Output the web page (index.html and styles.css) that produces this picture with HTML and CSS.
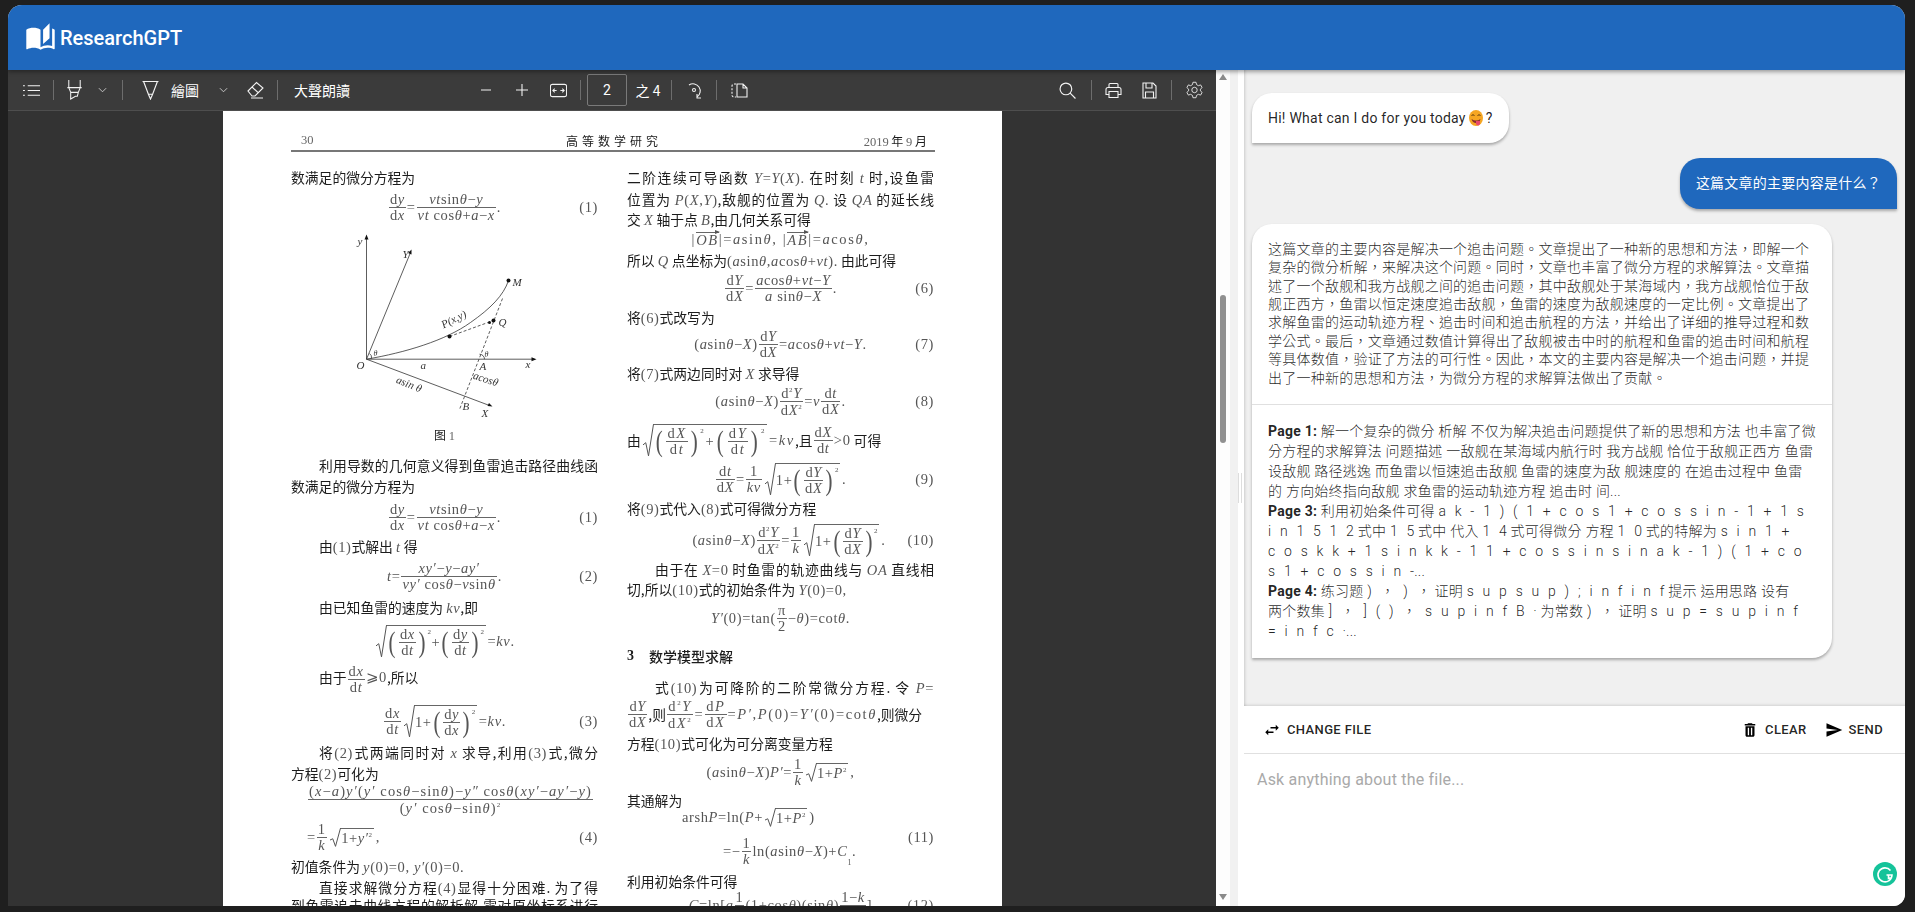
FILE: index.html
```html
<!DOCTYPE html>
<html lang="zh">
<head>
  <meta charset="UTF-8">
  <meta name="viewport" content="width=device-width, initial-scale=1.0">
  <title>ResearchGPT</title>
  <link rel="stylesheet" href="styles.css">
</head>
<body>
  <svg class="defs" width="0" height="0">
    <symbol id="rad" viewBox="0 0 10 30" preserveAspectRatio="none"><path d="M0 19 L2.5 17 L5 29 L9.5 .5" fill="none" stroke="#555" stroke-width="1" vector-effect="non-scaling-stroke"/></symbol>
  </svg>

  <div class="window">
    <header class="appbar">
      <svg class="logo" viewBox="0 0 24 24"><path d="M19 1l-5 5v11l5-4.5V1zM1 6v14.65c0 .25.25.5.5.5.1 0 .15-.05.25-.05C3.1 20.45 5.05 20 6.5 20c1.95 0 4.05.4 5.5 1.5V6c-1.45-1.1-3.55-1.5-5.5-1.5S2.45 4.9 1 6zm22 13.5V6c-.6-.45-1.25-.75-2-1v13.5c-1.1-.35-2.3-.5-3.5-.5-1.7 0-4.15.65-5.5 1.5v2c1.35-.85 3.8-1.5 5.5-1.5 1.65 0 3.35.3 4.75 1.05.1.05.15.05.25.05.25 0 .5-.25.5-.5v-1.1z"/></svg>
      <span class="brand">ResearchGPT</span>
    </header>

    <div class="content">
      <section class="pdf-pane">
        <div class="toolbar">
          <svg class="ti" viewBox="0 0 18 14"><path d="M5 2h13M5 7h13M5 12h13M0 2h2M0 7h2M0 12h2"/></svg>
          <i class="sep"></i>
          <svg class="ti tall" viewBox="0 0 16 21"><path d="M2 0v8M14 0v8M.5 8h15M2 8l2 5v7l5-3h2l1-4 2-5M4 13h8"/></svg>
          <svg class="chev" viewBox="0 0 10 6"><path d="M1 1l4 4 4-4"/></svg>
          <i class="sep"></i>
          <svg class="ti tall" viewBox="0 0 16 18"><path d="M.5 1h15M1.500 1L6 13h4l4.500-12M6 13l2 4.500 2-4.500"/></svg>
          <span class="tb-text">繪圖</span>
          <svg class="chev" viewBox="0 0 10 6"><path d="M1 1l4 4 4-4"/></svg>
          <svg class="ti tall" viewBox="0 0 17 18"><path d="M1 10l8.500-8.500 6.500 5.500-8 8H5zM5 6l6.500 6M4 17h12"/></svg>
          <i class="sep"></i>
          <span class="tb-text">大聲朗讀</span>
          <span></span>
          <svg class="ti small" viewBox="0 0 12 12"><path d="M1 6h10"/></svg>
          <svg class="ti small" viewBox="0 0 12 12"><path d="M0 6h12M6 0v12"/></svg>
          <svg class="ti" viewBox="0 0 18 14"><rect x=".5" y=".5" width="17" height="13" rx="2"/><path d="M3 7h4M11 7h4M5 5L3 7l2 2M13 5l2 2-2 2"/></svg>
          <i class="sep"></i>
          <span class="page-input">2</span>
          <span class="tb-text">之 4</span>
          <i class="sep"></i>
          <svg class="ti tall" viewBox="0 0 17 18"><path d="M3 4a7 7 0 1 1 8 12M11 13v4h4"/><circle cx="8" cy="9" r="1.500"/></svg>
          <i class="sep"></i>
          <svg class="ti" viewBox="0 0 17 15"><path d="M5 1H3a2 2 0 0 0-2 2v9a2 2 0 0 0 2 2h2" stroke-dasharray="2 1.500"/><path d="M6 1h6l4 4v9H6zM12 1v4h4"/></svg>
          <span></span>
          <svg class="ti" viewBox="0 0 16 16"><circle cx="6.500" cy="6.500" r="5.500"/><path d="M10.500 10.500L15.500 15.500"/></svg>
          <i class="sep"></i>
          <svg class="ti" viewBox="0 0 17 16"><path d="M4 5V2a1 1 0 0 1 1-1h7a1 1 0 0 1 1 1v3M4 12H1V7a2 2 0 0 1 2-2h11a2 2 0 0 1 2 2v5h-3M4 9h9v6H4z"/></svg>
          <svg class="ti" viewBox="0 0 15 17"><path d="M1 1h10l3 3v12H1zM4 1v5h6V1M3.500 16v-6h8v6"/></svg>
          <i class="sep"></i>
          <svg class="ti gear" viewBox="1 1 22 22"><path d="M10 2h4l.6 3 2.400 1.400 2.900-1 2 3.500-2.300 2a6 6 0 0 1 0 2.200l2.300 2-2 3.500-2.900-1L14.600 19 14 22h-4l-.6-3L7 17.600l-2.900 1-2-3.500 2.300-2a6 6 0 0 1 0-2.200l-2.300-2 2-3.500 2.900 1L9.400 5z"/><circle cx="12" cy="12" r="3.500"/></svg>
        </div>

        <div class="viewer">
          <article class="page">
            <div class="page-head">
              <span class="num">30</span>
              <span class="journal">高等数学研究</span>
              <span class="date"><span class="g">2019</span> 年 <span class="g">9</span> 月</span>
            </div>

            <div class="columns">
              <div class="col col-left">
                <div class="line"><span class="txt">数满足的微分方程为</span></div>
                <div class="line eq"><span class="sp"></span><span class="math"><span class="frac"><span>d<i>y</i></span><span>d<i>x</i></span></span>=<span class="frac"><span><i>vt</i>sin<i>θ</i>−<i>y</i></span><span><i>vt</i> cos<i>θ</i>+<i>a</i>−<i>x</i></span></span>.</span><span class="tag">(1)</span></div>
                <div class="line center">
                  <svg class="figure" viewBox="74.5 108.500 200 195" width="200" height="195">
                    <g class="fig-lines">
                      <path d="M96 238.700V118M96 238.700H262M96 238.700L140 132M96 238.700L219 285"/>
                      <path d="M96 238.700C135 232 175 220 200 202C220 188 233 175 238 160"/>
                      <path class="dash" d="M179 216L223 200M232 178L189 289"/>
                      <path d="M214 238.700a5 5 0 0 0-5-5M101 238a5 5 0 0 0-2-5"/>
                    </g>
                    <g class="fig-dots">
                      <circle cx="179" cy="216" r="2"/><circle cx="223" cy="200" r="2"/><circle cx="238" cy="160" r="2"/><circle cx="219" cy="202" r="1.500"/>
                      <path d="M96 114l-2 5h4zM266 238.700l-5-2v4zM141 129l-3.500 3.500 3.500 1.500zM222 286l-5-.5 1.500-3z"/>
                    </g>
                    <g class="fig-text">
                      <text x="87" y="124">y</text><text x="132" y="137">Y</text><text x="242" y="165">M</text>
                      <text x="228" y="205">Q</text><text x="86" y="248">O</text><text x="150" y="248">a</text>
                      <text x="209" y="249">A</text><text x="255" y="247">x</text><text x="192" y="289">B</text>
                      <text x="211" y="296">X</text><text class="sm" x="103" y="235">θ</text><text class="sm" x="214" y="236">θ</text>
                      <text x="173" y="208" transform="rotate(-27 173 208)">P(x,y)</text>
                      <text x="125" y="262" transform="rotate(22 125 262)">asin θ</text>
                      <text x="202" y="258" transform="rotate(18 202 258)">acosθ</text>
                    </g>
                  </svg>
                </div>
                <div class="line center"><span class="caption">图 <span class="g">1</span></span></div>
                <div class="line"><span class="txt just ind">利用导数的几何意义得到鱼雷追击路径曲线函</span></div>
                <div class="line"><span class="txt">数满足的微分方程为</span></div>
                <div class="line eq"><span class="sp"></span><span class="math"><span class="frac"><span>d<i>y</i></span><span>d<i>x</i></span></span>=<span class="frac"><span><i>vt</i>sin<i>θ</i>−<i>y</i></span><span><i>vt</i> cos<i>θ</i>+<i>a</i>−<i>x</i></span></span>.</span><span class="tag">(1)</span></div>
                <div class="line"><span class="txt ind">由<span class="m">(1)</span>式解出 <span class="m"><i>t</i></span> 得</span></div>
                <div class="line eq"><span class="sp"></span><span class="math"><i>t</i>=<span class="frac"><span><i>xy′</i>−<i>y</i>−<i>ay′</i></span><span><i>vy′</i> cos<i>θ</i>−<i>v</i>sin<i>θ</i></span></span>.</span><span class="tag">(2)</span></div>
                <div class="line"><span class="txt ind">由已知鱼雷的速度为 <span class="m"><i>kv</i></span>,即</span></div>
                <div class="line eq"><span class="sp"></span><span class="math"><span class="sqrt"><svg class="rad"><use href="#rad"/></svg><span class="rc"><span class="bp">(</span><span class="frac"><span>d<i>x</i></span><span>d<i>t</i></span></span><span class="bp">)</span><sup>2</sup>+<span class="bp">(</span><span class="frac"><span>d<i>y</i></span><span>d<i>t</i></span></span><span class="bp">)</span><sup>2</sup></span></span>=<i>kv</i>.</span><span class="sp"></span></div>
                <div class="line"><span class="txt ind">由于<span class="m"><span class="frac"><span>d<i>x</i></span><span>d<i>t</i></span></span>⩾0</span>,所以</span></div>
                <div class="line eq"><span class="sp"></span><span class="math"><span class="frac"><span>d<i>x</i></span><span>d<i>t</i></span></span><span class="sqrt"><svg class="rad"><use href="#rad"/></svg><span class="rc">1+<span class="bp">(</span><span class="frac"><span>d<i>y</i></span><span>d<i>x</i></span></span><span class="bp">)</span><sup>2</sup></span></span>=<i>kv</i>.</span><span class="tag">(3)</span></div>
                <div class="line"><span class="txt just ind">将<span class="m">(2)</span>式两端同时对 <span class="m"><i>x</i></span> 求导,利用<span class="m">(3)</span>式,微分</span></div>
                <div class="line"><span class="txt">方程<span class="m">(2)</span>可化为</span></div>
                <div class="line eq wide"><span class="math"><span class="frac"><span>(<i>x</i>−<i>a</i>)<i>y′</i>(<i>y′</i> cos<i>θ</i>−sin<i>θ</i>)−<i>y″</i> cos<i>θ</i>(<i>xy′</i>−<i>ay′</i>−<i>y</i>)</span><span>(<i>y′</i> cos<i>θ</i>−sin<i>θ</i>)<sup>2</sup></span></span></span></div>
                <div class="line eq wide"><span class="math">=<span class="frac"><span>1</span><span><i>k</i></span></span> <span class="sqrt"><svg class="rad"><use href="#rad"/></svg><span class="rc">1+<i>y′</i><sup>2</sup></span></span> ,</span><span class="tag">(4)</span></div>
                <div class="line"><span class="txt">初值条件为 <span class="m"><i>y</i>(0)=0, <i>y′</i>(0)=0.</span></span></div>
                <div class="line"><span class="txt just ind">直接求解微分方程<span class="m">(4)</span>显得十分困难. 为了得</span></div>
                <div class="line"><span class="txt just">到鱼雷追击曲线方程的解析解,需对原坐标系进行</span></div>
              </div>

              <div class="col col-right">
                <div class="line"><span class="txt just">二阶连续可导函数 <span class="m"><i>Y</i>=<i>Y</i>(<i>X</i>).</span> 在时刻 <span class="m"><i>t</i></span> 时,设鱼雷</span></div>
                <div class="line"><span class="txt just">位置为 <span class="m"><i>P</i>(<i>X</i>,<i>Y</i>)</span>,敌舰的位置为 <span class="m"><i>Q</i>.</span> 设 <span class="m"><i>QA</i></span> 的延长线</span></div>
                <div class="line"><span class="txt">交 <span class="m"><i>X</i></span> 轴于点 <span class="m"><i>B</i></span>,由几何关系可得</span></div>
                <div class="line eq"><span class="sp"></span><span class="math loose">|<span class="vec"><i>OB</i></span>|=<i>a</i>sin<i>θ</i>, |<span class="vec"><i>AB</i></span>|=<i>a</i>cos<i>θ</i>,</span><span class="sp"></span></div>
                <div class="line"><span class="txt">所以 <span class="m"><i>Q</i></span> 点坐标为<span class="m">(<i>a</i>sin<i>θ</i>,<i>a</i>cos<i>θ</i>+<i>vt</i>).</span> 由此可得</span></div>
                <div class="line eq"><span class="sp"></span><span class="math"><span class="frac"><span>d<i>Y</i></span><span>d<i>X</i></span></span>=<span class="frac"><span><i>a</i>cos<i>θ</i>+<i>vt</i>−<i>Y</i></span><span><i>a</i> sin<i>θ</i>−<i>X</i></span></span>.</span><span class="tag">(6)</span></div>
                <div class="line"><span class="txt">将<span class="m">(6)</span>式改写为</span></div>
                <div class="line eq"><span class="sp"></span><span class="math">(<i>a</i>sin<i>θ</i>−<i>X</i>)<span class="frac"><span>d<i>Y</i></span><span>d<i>X</i></span></span>=<i>a</i>cos<i>θ</i>+<i>vt</i>−<i>Y</i>.</span><span class="tag">(7)</span></div>
                <div class="line"><span class="txt">将<span class="m">(7)</span>式两边同时对 <span class="m"><i>X</i></span> 求导得</span></div>
                <div class="line eq"><span class="sp"></span><span class="math">(<i>a</i>sin<i>θ</i>−<i>X</i>)<span class="frac"><span>d<sup>2</sup><i>Y</i></span><span>d<i>X</i><sup>2</sup></span></span>=<i>v</i> <span class="frac"><span>d<i>t</i></span><span>d<i>X</i></span></span>.</span><span class="tag">(8)</span></div>
                <div class="line"><span class="txt flexline">由<span class="m inl loose"><span class="sqrt"><svg class="rad"><use href="#rad"/></svg><span class="rc"><span class="bp">(</span><span class="frac"><span>d<i>X</i></span><span>d<i>t</i></span></span><span class="bp">)</span><sup>2</sup>+<span class="bp">(</span><span class="frac"><span>d<i>Y</i></span><span>d<i>t</i></span></span><span class="bp">)</span><sup>2</sup></span></span>=<i>kv</i></span>,且<span class="m inl"><span class="frac"><span>d<i>X</i></span><span>d<i>t</i></span></span>&gt;0</span>&nbsp;可得</span></div>
                <div class="line eq"><span class="sp"></span><span class="math"><span class="frac"><span>d<i>t</i></span><span>d<i>X</i></span></span>=<span class="frac"><span>1</span><span><i>kv</i></span></span><span class="sqrt"><svg class="rad"><use href="#rad"/></svg><span class="rc">1+<span class="bp">(</span><span class="frac"><span>d<i>Y</i></span><span>d<i>X</i></span></span><span class="bp">)</span><sup>2</sup></span></span>.</span><span class="tag">(9)</span></div>
                <div class="line"><span class="txt">将<span class="m">(9)</span>式代入<span class="m">(8)</span>式可得微分方程</span></div>
                <div class="line eq"><span class="sp"></span><span class="math">(<i>a</i>sin<i>θ</i>−<i>X</i>)<span class="frac"><span>d<sup>2</sup><i>Y</i></span><span>d<i>X</i><sup>2</sup></span></span>=<span class="frac"><span>1</span><span><i>k</i></span></span><span class="sqrt"><svg class="rad"><use href="#rad"/></svg><span class="rc">1+<span class="bp">(</span><span class="frac"><span>d<i>Y</i></span><span>d<i>X</i></span></span><span class="bp">)</span><sup>2</sup></span></span>.</span><span class="tag tag-narrow">(10)</span></div>
                <div class="line"><span class="txt just ind">由于在 <span class="m"><i>X</i>=0</span> 时鱼雷的轨迹曲线与 <span class="m"><i>OA</i></span> 直线相</span></div>
                <div class="line"><span class="txt">切,所以<span class="m">(10)</span>式的初始条件为 <span class="m"><i>Y</i>(0)=0,</span></span></div>
                <div class="line eq"><span class="sp"></span><span class="math"><i>Y′</i>(0)=tan(<span class="frac"><span>π</span><span>2</span></span>−<i>θ</i>)=cot<i>θ</i>.</span><span class="sp"></span></div>
                <div class="line"><span class="txt heading"><b>3</b><span>数学模型求解</span></span></div>
                <div class="line"><span class="txt just ind">式<span class="m">(10)</span>为可降阶的二阶常微分方程. 令 <span class="m"><i>P</i>=</span></span></div>
                <div class="line"><span class="txt flexline"><span class="m inl"><span class="frac"><span>d<i>Y</i></span><span>d<i>X</i></span></span></span>,则<span class="m inl loose"><span class="frac"><span>d<sup>2</sup><i>Y</i></span><span>d<i>X</i><sup>2</sup></span></span>=<span class="frac"><span>d<i>P</i></span><span>d<i>X</i></span></span>=<i>P′</i>, <i>P</i>(0)=<i>Y′</i>(0)=cot<i>θ</i></span>,则微分</span></div>
                <div class="line"><span class="txt">方程<span class="m">(10)</span>式可化为可分离变量方程</span></div>
                <div class="line eq"><span class="sp"></span><span class="math">(<i>a</i>sin<i>θ</i>−<i>X</i>)<i>P′</i>=<span class="frac"><span>1</span><span><i>k</i></span></span> <span class="sqrt"><svg class="rad"><use href="#rad"/></svg><span class="rc">1+<i>P</i><sup>2</sup></span></span> ,</span><span class="sp"></span></div>
                <div class="line"><span class="txt">其通解为</span></div>
                <div class="line eq">
                  <div class="stack">
                    <span class="math">arsh<i>P</i> =ln(<i>P</i>+<span class="sqrt"><svg class="rad"><use href="#rad"/></svg><span class="rc">1+<i>P</i><sup>2</sup></span></span> )</span>
                    <span class="math second">=−<span class="frac"><span>1</span><span><i>k</i></span></span>ln(<i>a</i>sin<i>θ</i>−<i>X</i>)+<i>C</i><sub>1</sub>.</span>
                  </div>
                  <span class="tag">(11)</span>
                </div>
                <div class="line"><span class="txt">利用初始条件可得</span></div>
                <div class="line eq"><span class="sp"></span><span class="math"><i>C</i> =ln[<i>a</i><span class="frac"><span>1</span><span><i>k</i></span></span>(1+cos<i>θ</i>)(sin<i>θ</i>)<span class="frac"><span>1−<i>k</i></span><span><i>k</i></span></span>]</span><span class="tag">(12)</span></div>
              </div>
            </div>
          </article>
        </div>
      </section>

      <div class="pdf-scroll">
        <i class="arrow up"></i>
        <i class="thumb"></i>
        <i class="arrow down"></i>
      </div>
      <div class="splitter"><span class="handle"></span></div>

      <section class="chat-pane" lang="zh-TW">
        <div class="messages">
          <div class="msg ai short">
            <p>Hi! What can I do for you today<svg class="emoji" viewBox="0 0 14 16"><ellipse cx="7" cy="8" rx="7" ry="8" fill="#f5a623"/><path d="M2.500 5.500q1.500-1.500 3 0M8.500 5.500q1.500-1.500 3 0" stroke="#5b3a10" fill="none"/><path d="M2.500 9q4.500 3 9 0q-1 4-4.500 4T2.500 9z" fill="#8a2c2c"/><path d="M7 11h4v2.500a2 2 0 0 1-4 0z" fill="#e8476a"/></svg>?</p>
          </div>
          <div class="msg user">
            <p>这篇文章的主要内容是什么？</p>
          </div>
          <div class="msg ai long">
            <div class="answer">这篇文章的主要内容是解决一个追击问题。文章提出了一种新的思想和方法，即解一个复杂的微分析解，来解决这个问题。同时，文章也丰富了微分方程的求解算法。文章描述了一个敌舰和我方战舰之间的追击问题，其中敌舰处于某海域内，我方战舰恰位于敌舰正西方，鱼雷以恒定速度追击敌舰，鱼雷的速度为敌舰速度的一定比例。文章提出了求解鱼雷的运动轨迹方程、追击时间和追击航程的方法，并给出了详细的推导过程和数学公式。最后，文章通过数值计算得出了敌舰被击中时的航程和鱼雷的追击时间和航程等具体数值，验证了方法的可行性。因此，本文的主要内容是解决一个追击问题，并提出了一种新的思想和方法，为微分方程的求解算法做出了贡献。</div>
            <div class="sources">
              <p><b>Page 1:</b> 解一个复杂的微分 析解 不仅为解决追击问题提供了新的思想和方法 也丰富了微<br>分方程的求解算法 问题描述 一敌舰在某海域内航行时 我方战舰 恰位于敌舰正西方 鱼雷<br>设敌舰 路径逃逸 而鱼雷以恒速追击敌舰 鱼雷的速度为敌 舰速度的 在追击过程中 鱼雷<br>的 方向始终指向敌舰 求鱼雷的运动轨迹方程 追击时 间...</p>
              <p><b>Page 3:</b> 利用初始条件可得 <span class="gap">a k - 1 ) ( 1 + c o s 1 + c o s s i n - 1 + 1 s</span><br><span class="gap">i n 1 5 1 2</span> 式中 <span class="gap">1 5</span> 式中 代入 <span class="gap">1 4</span> 式可得微分 方程 <span class="gap">1 0</span> 式的特解为 <span class="gap">s i n 1 +</span><br><span class="gap">c o s k k + 1 s i n k k - 1 1 + c o s s i n s i n a k - 1 ) ( 1 + c o</span><br><span class="gap">s 1 + c o s s i n -...</span></p>
              <p><b>Page 4:</b> 练习题 <span class="gap">) ， ) ，</span> 证明 <span class="gap">s u p s u p ) ; i n f i n f</span> 提示 运用思路 设有<br>两个数集 <span class="gap">] ， ] ( ) ， s u p i n f B ·</span> 为常数 <span class="gap">) ，</span> 证明 <span class="gap">s u p = s u p i n f</span><br><span class="gap">= i n f c ·...</span></p>
            </div>
          </div>
        </div>

        <div class="actions">
          <button class="act">
            <svg viewBox="0 0 24 24"><path d="M6.990 11 3 15l3.990 4v-3H14v-2H6.990v-3zM21 9l-3.990-4v3H10v2h7.010v3L21 9z"/></svg>
            Change file
          </button>
          <span class="grow"></span>
          <button class="act">
            <svg viewBox="0 0 24 24"><path fill-rule="evenodd" d="M6 19c0 1.100.9 2 2 2h8c1.100 0 2-.9 2-2V7H6v12zM9 9h1.800v10H9zM13.200 9H15v10h-1.800zM19 4h-3.500l-1-1h-5l-1 1H5v2h14V4z"/></svg>
            Clear
          </button>
          <button class="act">
            <svg viewBox="0 0 24 24"><path d="M2.010 21 23 12 2.010 3 2 10l15 2-15 2z"/></svg>
            Send
          </button>
        </div>

        <div class="input-area">
          <div class="placeholder">Ask anything about the file...</div>
          <svg class="grammarly" viewBox="0 0 24 24" width="24" height="24">
            <circle cx="12" cy="12" r="12" fill="#15c39a"/>
            <path d="M17.500 8.500A7 7 0 1 0 19 13h-5.500m2 0v3.500l3.500-1" fill="none" stroke="#fff" stroke-width="1.600"/>
          </svg>
        </div>
      </section>
    </div>
  </div>
</body>
</html>
```

FILE: styles.css
```css
* {
  box-sizing: border-box;
}

html, body {
  height: 100%;
}

body {
  margin: 0;
  padding: 5px 10px 6px 8px;
  overflow: hidden;
  background-color: #1f1f1f;
  font-family: 'Roboto', 'Noto Sans CJK TC', sans-serif;
}

.defs {
  position: absolute;
}

.window {
  display: flex;
  flex-direction: column;
  height: 100%;
  overflow: hidden;
  border-radius: 14px 14px 12px 0;
  background-color: #fff;
}

/* top bar */
.appbar {
  position: relative;
  z-index: 3;
  display: flex;
  flex: 0 0 65px;
  align-items: center;
  padding-left: 17px;
  background-color: #1f68bd;
  color: white;
  box-shadow: 0 2px 4px rgba(0,0,0,0.35);
}

.logo {
  width: 31px;
  height: 31px;
  margin-right: 4px;
  fill: white;
}

.brand {
  font-size: 20px;
  font-weight: 500;
}

.content {
  display: flex;
  flex: 1;
  min-height: 0;
}

/* pdf side */
.pdf-pane {
  display: flex;
  flex-direction: column;
  flex: 0 0 1208px;
  background-color: #333;
}

.toolbar {
  display: grid;
  flex: 0 0 41px;
  grid-template-columns: 39px 4px 38px 18px 22px 35px 34px 42px 22px 23px 66px 118px 26px 45px 29px 14px 40px 42px 4px 42px 2px 44px 1fr 35px 12px 32px 40px 4px 42px;
  align-items: center;
  justify-items: center;
  padding: 0 1px 0 4px;
  background-color: #3b3b3b;
  border-bottom: 1px solid #4e4e4e;
  color: white;
  font-family: 'Noto Sans CJK TC', sans-serif;
  font-size: 14px;
}

.ti {
  width: 17px;
  height: 17px;
  fill: none;
  stroke: #f2f2f2;
  stroke-width: 1.1;
}

.ti.tall {
  height: 20px;
}

.ti.small {
  width: 12px;
  height: 12px;
}

.ti.gear {
  height: 18px;
}

.chev {
  width: 9px;
  height: 6px;
  fill: none;
  stroke: #d0d0d0;
}

.sep {
  width: 1px;
  height: 20px;
  background-color: #6d6d6d;
}

.tb-text {
  white-space: nowrap;
}

.page-input {
  display: flex;
  align-items: center;
  justify-content: center;
  width: 40px;
  height: 32px;
  border: 1px solid #7a7a7a;
  border-radius: 2px;
  font-family: 'Roboto', sans-serif;
}

.viewer {
  flex: 1;
  min-height: 0;
  overflow: hidden;
  padding-left: 215px;
}

.page {
  width: 779px;
  height: 100%;
  overflow: hidden;
  padding: 20px 0 0 68px;
  background-color: white;
  color: #1c1c1c;
  font-family: 'Noto Sans CJK SC', sans-serif;
  font-size: 13.8px;
  filter: blur(0.3px);
}

.page-head {
  display: grid;
  grid-template-columns: 1fr auto 1fr;
  align-items: center;
  width: 644px;
  height: 21px;
  padding: 0 8px 0 10px;
  border-bottom: 2px solid #777;
  font-size: 12px;
}

.journal {
  letter-spacing: 4px;
}

.g {
  color: #666;
  font-family: 'Liberation Serif', serif;
  font-size: 12.5px;
}

.num {
  color: #666;
  font-family: 'Liberation Serif', serif;
  font-size: 12.5px;
}

.date {
  text-align: right;
}

.columns {
  display: flex;
  gap: 29px;
  margin-top: 14px;
}

/* every .line sits on the bottom edge of its row, so a row height is the
   distance between two line centres */
.col {
  display: grid;
  flex: 0 0 307px;
  align-items: end;
}

.col-left {
  grid-template-rows: 11px 30px 119px 109px 30px 21px 31px 29px 30px 31px 34px 38px 42px 31px 21px 27px 37px 29px 21px 18px;
}

.col-right {
  grid-template-rows: 11px 22px 20px 20px 21px 28px 29px 27px 29px 28px 39px 39px 29px 32px 29px 20px 29px 38px 31px 27px 29px 29px 28px 37px 44px 24px;
}

.line {
  display: flex;
  align-items: center;
  height: 0;
  white-space: nowrap;
}

.center {
  justify-content: center;
}

.txt {
  width: 100%;
}

.just {
  text-align: justify;
  text-align-last: justify;
  white-space: normal;
}

.ind {
  padding-left: 28px;
}

.flexline {
  display: flex;
  align-items: center;
}

.inl {
  display: inline-flex;
  align-items: center;
}

.m, .math, .tag {
  color: #555;
  font-family: 'Liberation Serif', serif;
  font-size: 14.5px;
  letter-spacing: 0.6px;
}

.math.loose, .m.loose {
  letter-spacing: 1.6px;
}

.caption {
  font-size: 12px;
}

.sp, .tag {
  flex: 1 1 0;
}

.tag {
  text-align: right;
}

.tag-narrow {
  flex: 0 0 auto;
  margin-left: 22px;
}

.math {
  display: inline-flex;
  flex: 0 0 auto;
  align-items: center;
}

.wide .math {
  margin-left: 16px;
}

.wide .frac {
  font-size: 14.5px;
  letter-spacing: 1.1px;
}

.frac {
  display: inline-flex;
  flex-direction: column;
  align-items: center;
  margin: 0 1px;
  line-height: 15px;
  vertical-align: middle;
}

.frac > span {
  padding: 0 1px;
}

.frac > span:first-child {
  align-self: stretch;
  border-bottom: 1px solid #666;
  text-align: center;
}

.math sup, .m sup {
  align-self: flex-start;
  font-size: 7px;
  line-height: 10px;
}

.math sub {
  font-size: 8px;
  align-self: flex-end;
}

.sqrt {
  position: relative;
  display: inline-flex;
  margin: 0 2px;
  padding-left: 10px;
  vertical-align: middle;
}

.rad {
  position: absolute;
  top: 0;
  left: 0;
  width: 11px;
  height: 100%;
}

.rc {
  display: inline-flex;
  align-items: center;
  padding: 1px 1px 0;
  border-top: 1px solid #666;
}

.bp {
  font-size: 30px;
  font-weight: normal;
  line-height: 30px;
  transform: scaleX(0.7);
}

.vec {
  position: relative;
  border-top: 1px solid #666;
  line-height: 14px;
}

.vec::after {
  content: "";
  position: absolute;
  top: -3px;
  right: -1px;
  border-top: 2.5px solid transparent;
  border-bottom: 2.5px solid transparent;
  border-left: 5px solid #555;
}

.heading {
  display: flex;
  align-items: center;
  gap: 15px;
  font-size: 14px;
  font-weight: 500;
}

.heading b {
  font-family: 'Liberation Serif', serif;
}

.stack {
  display: flex;
  flex-direction: column;
  flex: 0 0 auto;
  gap: 9px;
  margin-left: 55px;
}

.second {
  margin-left: 41px;
}

/* figure 1 */
.figure {
  flex: none;
}

.fig-lines {
  fill: none;
  stroke: #333;
  stroke-width: 0.8;
}

.dash {
  stroke-dasharray: 3 2;
}

.fig-dots {
  fill: #111;
}

.fig-text {
  fill: #333;
  font-family: 'Liberation Serif', serif;
  font-size: 11px;
  font-style: italic;
}

.fig-text .sm {
  font-size: 8px;
}

/* scrollbar next to the pdf */
.pdf-scroll {
  display: flex;
  flex: 0 0 14px;
  flex-direction: column;
  align-items: center;
  background-color: #fdfdfd;
}

.arrow {
  width: 0;
  height: 0;
  border-right: 4px solid transparent;
  border-left: 4px solid transparent;
}

.arrow.up {
  margin-top: 4px;
  border-bottom: 6px solid #8a8a8a;
}

.arrow.down {
  margin-top: auto;
  margin-bottom: 6px;
  border-top: 6px solid #8a8a8a;
}

.thumb {
  width: 6px;
  height: 148px;
  margin-top: 215px;
  border-radius: 3px;
  background-color: #909090;
}

.splitter {
  display: flex;
  flex: 0 0 14px;
  align-items: flex-start;
  padding-top: 403px;
  background: linear-gradient(to right, #f1f1f1 8px, #fff 8px);
}

.handle {
  width: 4px;
  height: 30px;
  margin-left: 8px;
  border-right: 1px solid #ddd;
  border-left: 1px solid #ddd;
}

/* chat side */
.chat-pane {
  display: flex;
  flex: 1;
  flex-direction: column;
  min-width: 0;
  background-color: white;
}

.messages {
  display: flex;
  flex: 0 0 636px;
  flex-direction: column;
  gap: 15px;
  padding: 23px 8px 0;
  background-color: #f0f0f0;
  box-shadow: inset 3px 0 3px -2px rgba(0,0,0,0.15), inset 0 -3px 3px -2px rgba(0,0,0,0.12);
}

.msg {
  padding: 16px;
  border-radius: 20px;
  background-color: white;
  box-shadow: 0 2px 3px rgba(0,0,0,0.3);
  color: rgba(0,0,0,0.87);
  font-size: 14px;
  letter-spacing: 0.24px;
  line-height: 18.4px;
}

.msg p {
  margin: 0;
}

.msg.ai {
  align-self: flex-start;
  border-bottom-left-radius: 0;
}

.msg.user {
  align-self: flex-end;
  padding: 16px;
  border-bottom-right-radius: 0;
  background-color: #1f68bd;
  color: white;
}

.msg.short p {
  display: flex;
  align-items: center;
}

.emoji {
  width: 14px;
  height: 16px;
  margin: 0 3px 0 3px;
}

.msg.long {
  width: 580px;
  padding: 0;
}

.answer {
  padding: 16px 16px 17px;
  border-bottom: 1px solid #e0e0e0;
  font-weight: 300;
}

.sources {
  padding: 16px 8px 17px 16px;
  font-weight: 300;
  line-height: 20px;
  white-space: nowrap;
}

.sources b {
  font-weight: 700;
}

.gap {
  word-spacing: 4.9px;
}

.actions {
  display: flex;
  flex: 0 0 48px;
  align-items: center;
  gap: 3px;
  padding: 0 17px 0 9px;
  border-bottom: 1px solid #e0e0e0;
}

.grow {
  flex: 1;
}

.act {
  display: flex;
  align-items: center;
  gap: 6px;
  padding: 4px 5px 4px 10px;
  border: none;
  background: none;
  color: rgba(0,0,0,0.87);
  font-family: 'Roboto', sans-serif;
  font-size: 13px;
  font-weight: 500;
  letter-spacing: 0.37px;
  text-transform: uppercase;
}

.act svg {
  width: 18px;
  height: 18px;
}

.input-area {
  display: flex;
  flex: 1;
  flex-direction: column;
  padding: 16px 8px 20px 13px;
}

.placeholder {
  color: #a9a9a9;
  font-size: 16px;
  letter-spacing: 0.2px;
  line-height: 20px;
}

.grammarly {
  align-self: flex-end;
  margin-top: auto;
}
```
